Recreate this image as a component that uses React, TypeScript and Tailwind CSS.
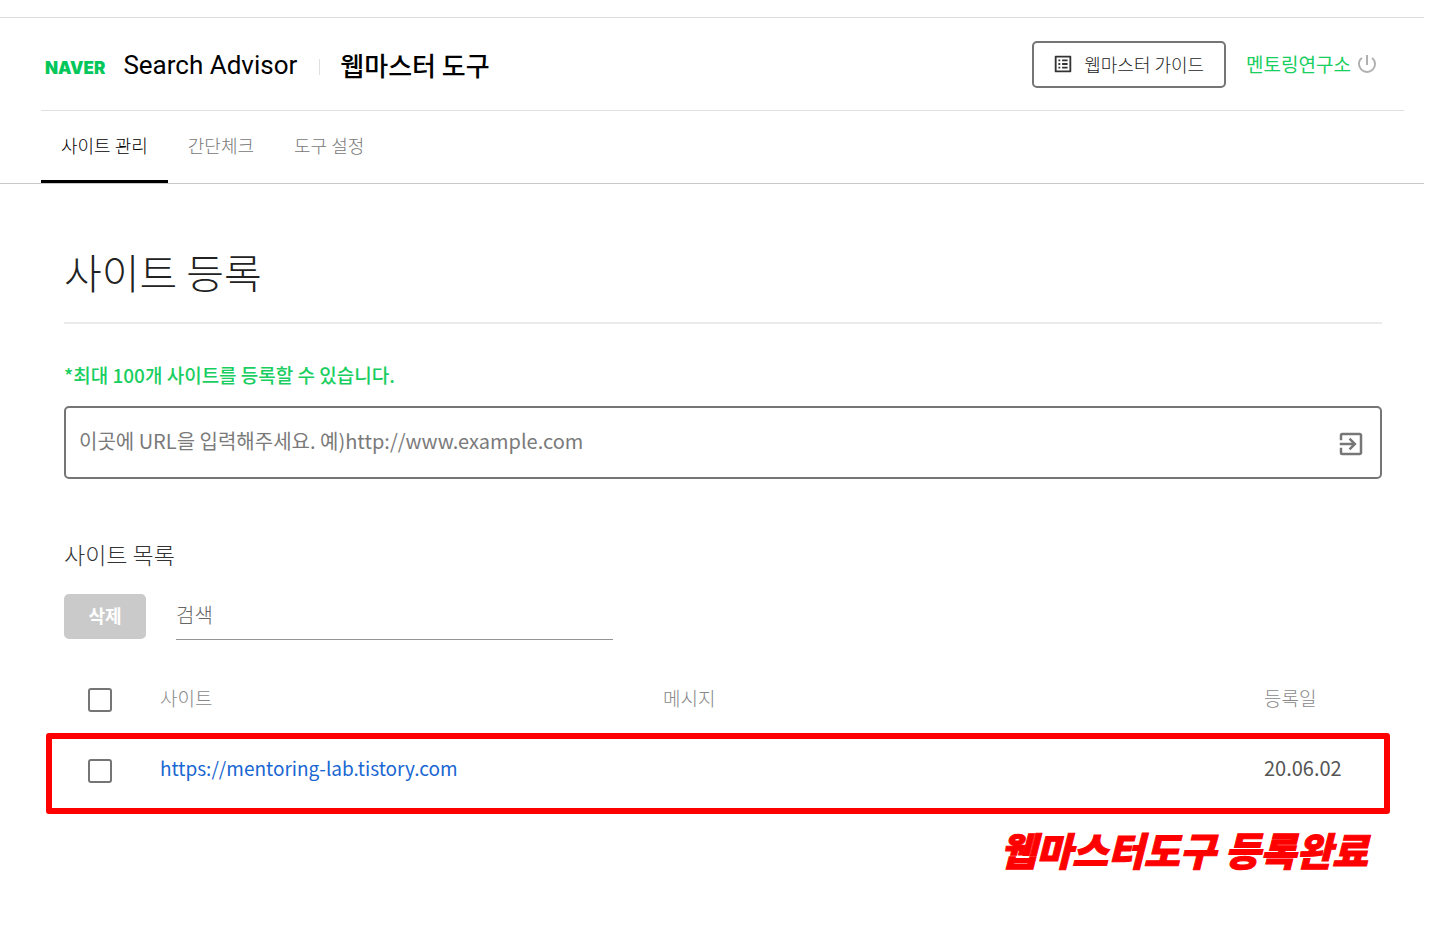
import { MdExitToApp, MdListAlt, MdPowerSettingsNew } from "react-icons/md";

const tabs = [
  { label: "사이트 관리", active: true },
  { label: "간단체크", active: false },
  { label: "도구 설정", active: false },
];

const sites = [{ url: "https://mentoring-lab.tistory.com", message: "", date: "20.06.02" }];

const checkboxClass =
  "block size-6 appearance-none rounded-[3px] border-2 border-[#757575] bg-white checked:bg-[#757575]";

function Header() {
  return (
    <header className="mt-[17px] border-t border-b border-t-[#dcdcdc] border-b-[#c8c8c8]">
      <div className="ml-[41px] mr-5 flex h-[93px] items-center border-b border-[#e0e0e0] pl-1 pr-[25px]">
        <a
          href="#"
          className="pt-2 font-['Inter',sans-serif] text-[17px] leading-6 font-black text-[#03c75a]"
        >
          NAVER
        </a>
        <h1 className="flex items-center pt-0.5 text-[26px] leading-8 text-black">
          <span className="ml-[18px] font-['Roboto',sans-serif]">Search Advisor</span>
          <span className="mt-1 mr-5 ml-[22px] h-4 w-px bg-[#e0e0e0]" />
          <span className="font-medium">웹마스터 도구</span>
        </h1>
        <div className="ml-auto flex items-center">
          <a
            href="#"
            className="flex h-[47px] items-center rounded-[5px] border-2 border-[#757575] pr-5 pl-[18px] text-[18px] leading-6 font-light text-[#222]"
          >
            <MdListAlt className="mr-2.5 size-[22px] text-[#333]" />
            웹마스터 가이드
          </a>
          <a href="#" className="ml-5 text-[19px] leading-6 text-[#19ce60]">
            멘토링연구소
          </a>
          <button type="button" aria-label="로그아웃" className="ml-1 text-[#b0b0b0]">
            <MdPowerSettingsNew className="size-6" />
          </button>
        </div>
      </div>
      <nav className="ml-[41px] flex h-[72px]">
        {tabs.map((tab) => (
          <a
            key={tab.label}
            href="#"
            className={
              tab.active
                ? "flex items-center border-b-3 border-black px-5 text-[18px] font-light text-black"
                : "flex items-center border-b-3 border-transparent px-5 text-[18px] font-light text-[#777]"
            }
          >
            {tab.label}
          </a>
        ))}
      </nav>
    </header>
  );
}

function SiteTable() {
  return (
    <table className="mt-[23px] w-full table-fixed text-left text-[19px] leading-7">
      <thead>
        <tr className="h-[70px] text-[#888]">
          <th className="w-24 pt-1 pl-6">
            <input type="checkbox" aria-label="전체 선택" className={checkboxClass} />
          </th>
          <th className="w-[503px] font-light">사이트</th>
          <th className="font-light">메시지</th>
          <th className="w-[118px] font-light">등록일</th>
        </tr>
      </thead>
      <tbody>
        {sites.map((site) => (
          <tr key={site.url} className="relative h-[81px]">
            <td className="pb-1.5 pl-6">
              <input type="checkbox" aria-label={site.url} className={checkboxClass} />
              <span className="pointer-events-none absolute inset-y-0 -left-[18px] -right-2 rounded-[3px] border-6 border-[#ff0000]" />
            </td>
            <td className="pb-3">
              <a href={site.url} className="text-[19px] text-[#1967d2]">
                {site.url}
              </a>
            </td>
            <td className="pb-3">{site.message}</td>
            <td className="pb-3 text-[20px] text-[#555]">{site.date}</td>
          </tr>
        ))}
      </tbody>
    </table>
  );
}

export default function App() {
  return (
    <div className="min-h-screen bg-white pr-[10px] font-['Noto_Sans_CJK_KR',sans-serif]">
      <Header />
      <main className="pr-[42px] pl-16">
        <h2 className="mt-[57px] border-b-2 border-[#ebebeb] pb-[21px] text-[41px] leading-[60px] font-light text-[#222]">
          사이트 등록
        </h2>
        <p className="mt-[37px] text-[19px] leading-7 font-medium text-[#19ce60]">
          *최대 100개 사이트를 등록할 수 있습니다.
        </p>
        <form className="mt-[17px] flex h-[73px] items-center rounded-[5px] border-2 border-[#757575] pr-3.5 pl-[13px]">
          <input
            type="url"
            aria-label="사이트 URL"
            placeholder="이곳에 URL을 입력해주세요. 예)http://www.example.com"
            className="h-full min-w-0 flex-1 pb-1 text-[20px] outline-none placeholder:text-[#7a7a7a]"
          />
          <button type="submit" aria-label="사이트 등록" className="pt-0.5 text-[#777]">
            <MdExitToApp className="size-[30px]" />
          </button>
        </form>
        <h3 className="mt-[59px] text-[23px] leading-8 font-light text-[#333]">사이트 목록</h3>
        <div className="mt-6 flex items-start">
          <button
            type="button"
            className="h-[45px] w-[82px] rounded-[5px] bg-[#cacaca] pb-0.5 text-[18px] font-bold text-white"
          >
            삭제
          </button>
          <input
            type="search"
            aria-label="검색"
            placeholder="검색"
            className="ml-[30px] h-[46px] w-[437px] border-b border-[#949494] pb-1 text-[20px] font-light outline-none placeholder:text-[#666]"
          />
        </div>
        <SiteTable />
        <p className="mt-2 pr-3.5 text-right text-[39px] leading-[54px] font-black text-[#ff0000] italic [-webkit-text-stroke:1px_#ff0000]">
          웹마스터도구 등록완료
        </p>
      </main>
    </div>
  );
}
